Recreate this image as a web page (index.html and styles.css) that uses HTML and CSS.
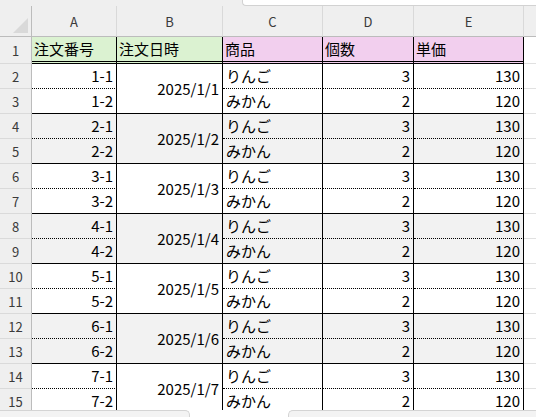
FILE: index.html
```html
<!DOCTYPE html>
<html lang="ja">
<head>
<meta charset="utf-8">
<link rel="stylesheet" href="styles.css">
</head>
<body>
<div class="app">
  <div class="topbar"><div class="formula"></div></div>
  <div class="sheet">
    <div class="grid">
      <div class="ch corner"><svg width="15" height="15" viewBox="0 0 15 15"><polygon points="15,0 15,15 0,15" fill="#d9d9d9"/></svg></div>
      <div class="ch">A</div><div class="ch">B</div><div class="ch">C</div><div class="ch">D</div><div class="ch">E</div><div class="ch fill-h"></div>

      <div class="rh rh1">1</div>
      <div class="cell hd green">注文番号</div><div class="cell hd green">注文日時</div><div class="cell hd pink">商品</div><div class="cell hd pink">個数</div><div class="cell hd pink">単価</div><div class="fill fill1"></div>

      <div class="rh">2</div><div class="cell r top">1-1</div><div class="cell date">2025/1/1</div><div class="cell l top">りんご</div><div class="cell r top">3</div><div class="cell r top">130</div><div class="fill"></div>
      <div class="rh">3</div><div class="cell r bot">1-2</div><div class="cell l bot">みかん</div><div class="cell r bot">2</div><div class="cell r bot">120</div><div class="fill"></div>

      <div class="rh">4</div><div class="cell r top alt">2-1</div><div class="cell date alt">2025/1/2</div><div class="cell l top alt">りんご</div><div class="cell r top alt">3</div><div class="cell r top alt">130</div><div class="fill"></div>
      <div class="rh">5</div><div class="cell r bot alt">2-2</div><div class="cell l bot alt">みかん</div><div class="cell r bot alt">2</div><div class="cell r bot alt">120</div><div class="fill"></div>

      <div class="rh">6</div><div class="cell r top">3-1</div><div class="cell date">2025/1/3</div><div class="cell l top">りんご</div><div class="cell r top">3</div><div class="cell r top">130</div><div class="fill"></div>
      <div class="rh">7</div><div class="cell r bot">3-2</div><div class="cell l bot">みかん</div><div class="cell r bot">2</div><div class="cell r bot">120</div><div class="fill"></div>

      <div class="rh">8</div><div class="cell r top alt">4-1</div><div class="cell date alt">2025/1/4</div><div class="cell l top alt">りんご</div><div class="cell r top alt">3</div><div class="cell r top alt">130</div><div class="fill"></div>
      <div class="rh">9</div><div class="cell r bot alt">4-2</div><div class="cell l bot alt">みかん</div><div class="cell r bot alt">2</div><div class="cell r bot alt">120</div><div class="fill"></div>

      <div class="rh">10</div><div class="cell r top">5-1</div><div class="cell date">2025/1/5</div><div class="cell l top">りんご</div><div class="cell r top">3</div><div class="cell r top">130</div><div class="fill"></div>
      <div class="rh">11</div><div class="cell r bot">5-2</div><div class="cell l bot">みかん</div><div class="cell r bot">2</div><div class="cell r bot">120</div><div class="fill"></div>

      <div class="rh">12</div><div class="cell r top alt">6-1</div><div class="cell date alt">2025/1/6</div><div class="cell l top alt">りんご</div><div class="cell r top alt">3</div><div class="cell r top alt">130</div><div class="fill"></div>
      <div class="rh">13</div><div class="cell r bot alt">6-2</div><div class="cell l bot alt">みかん</div><div class="cell r bot alt">2</div><div class="cell r bot alt">120</div><div class="fill"></div>

      <div class="rh">14</div><div class="cell r top">7-1</div><div class="cell date">2025/1/7</div><div class="cell l top">りんご</div><div class="cell r top">3</div><div class="cell r top">130</div><div class="fill"></div>
      <div class="rh">15</div><div class="cell r bot">7-2</div><div class="cell l bot">みかん</div><div class="cell r bot">2</div><div class="cell r bot">120</div><div class="fill"></div>
    </div>
  </div>
  <div class="bottombar"><div class="tabs"></div><div class="scroll"></div></div>
</div>
</body>
</html>
```

FILE: styles.css
```css
* { box-sizing: border-box; margin: 0; padding: 0; }
html, body { width: 536px; height: 417px; overflow: hidden; background: #fff; }
body { font-family: "Noto Sans CJK JP", "Noto Sans", sans-serif; color: #000; }

.app { display: flex; flex-direction: column; height: 417px; }

.topbar { flex: none; height: 6px; background: #efefef; display: flex; justify-content: flex-end; }
.formula { width: 294px; height: 6px; background: #fff; border-left: 1px solid #d2d2d2; border-bottom: 1px solid #d2d2d2; border-bottom-left-radius: 4px; }

.sheet { flex: 1; min-height: 0; overflow: hidden; }

.grid {
  display: grid;
  grid-template-columns: 32px 85px 106px 100px 91px 110px 1fr;
  grid-template-rows: 31px 27px;
  grid-auto-rows: 25px;
}

.ch {
  background: #efefef;
  border-right: 1px solid #d9d9d9;
  border-bottom: 1px solid #bcbcbc;
  font-size: 13px;
  color: #3a3a3a;
  display: flex;
  align-items: center;
  justify-content: center;
}
.corner { justify-content: flex-end; align-items: flex-end; padding: 0 3px 3px 0; border-right-color: #bcbcbc; }
.corner svg { display: block; }
.fill-h { border-right: none; }

.rh {
  background: #efefef;
  border-right: 1px solid #bcbcbc;
  border-bottom: 1px solid #dadada;
  font-size: 13px;
  color: #3a3a3a;
  display: flex;
  align-items: center;
  justify-content: center;
}

.cell {
  font-size: 15px;
  line-height: 20px;
  border-right: 1px solid #000;
  display: flex;
  align-items: flex-end;
  padding-bottom: 2px;
  white-space: nowrap;
  background: #fff;
}

.hd { border-bottom: 3px double #000; padding-left: 2px; padding-bottom: 2px; }
.green { background: #dbf2d1; }
.pink { background: #f2cfee; }

.r { justify-content: flex-end; padding-right: 3px; }
.l { justify-content: flex-start; padding-left: 3px; }
.top { border-bottom: 1px dotted #000; }
.bot { border-bottom: 1px solid #000; }
.date {
  grid-row: span 2;
  justify-content: flex-end;
  align-items: center;
  padding: 0 3px 0 0;
  border-bottom: 1px solid #000;
}
.alt { background: #f2f2f2; }

.fill { border-bottom: 1px solid #e1e1e1; background: #fff; }

.bottombar { flex: none; height: 7px; display: flex; justify-content: space-between; background: #fff; }
.tabs { width: 190px; background: #f3f3f3; border-top: 1px solid #d4d4d4; border-right: 1px solid #d4d4d4; border-top-right-radius: 5px; }
.scroll { width: 248px; background: #f3f3f3; border-top: 1px solid #d4d4d4; border-left: 1px solid #d4d4d4; border-top-left-radius: 5px; }
```
